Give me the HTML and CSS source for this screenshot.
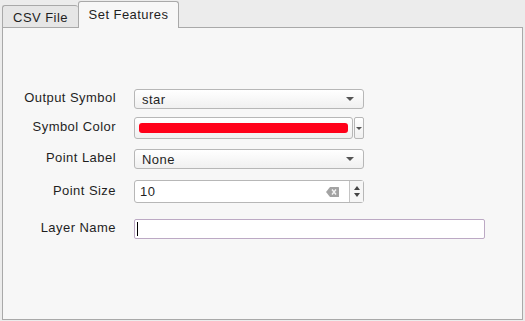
FILE: index.html
```html
<!DOCTYPE html>
<html>
<head>
<meta charset="utf-8">
<link rel="stylesheet" href="styles.css">
</head>
<body>
<div class="tabs">
  <div class="tab inactive">CSV File</div>
  <div class="tab active">Set Features</div>
</div>
<div class="panel">
  <div class="form">
    <div class="row r1">
      <label class="lbl">Output Symbol</label>
      <div class="combo w230"><span>star</span><span class="arrow"></span></div>
    </div>
    <div class="row r2">
      <label class="lbl">Symbol Color</label>
      <div class="colorwrap">
        <div class="colorbtn"><div class="swatch"></div></div>
        <div class="colordrop"><span class="arrow"></span></div>
      </div>
    </div>
    <div class="row r3">
      <label class="lbl">Point Label</label>
      <div class="combo w230"><span>None</span><span class="arrow"></span></div>
    </div>
    <div class="row r4">
      <label class="lbl">Point Size</label>
      <div class="spin">
        <div class="spintext"><span>10</span>
          <svg class="clear" width="13" height="10" viewBox="0 0 13 10"><path d="M4 0H12.5a0.5 0.5 0 0 1 .5.5V9.5a.5.5 0 0 1-.5.5H4L0 5Z" fill="#a3a3a3"/><path d="M6 2.5L10 7.5M10 2.5L6 7.5" stroke="#f4f4f4" stroke-width="1.4"/></svg>
        </div>
        <div class="spinbtns"><span class="up"></span><span class="down"></span></div>
      </div>
    </div>
    <div class="row r5">
      <label class="lbl">Layer Name</label>
      <div class="textinput"><span class="caret"></span></div>
    </div>
  </div>
</div>
</body>
</html>
```
FILE: styles.css
```css
html, body { margin: 0; padding: 0; }
body {
  width: 525px; height: 321px;
  background: #ececec;
  font-family: "Liberation Sans", Arial, sans-serif;
  font-size: 13px;
  letter-spacing: 0.45px;
  color: #1f1f1f;
  overflow: hidden;
}
.tabs {
  display: flex;
  align-items: flex-end;
  height: 27px;
  padding-left: 2px;
}
.tab {
  box-sizing: border-box;
  display: flex;
  align-items: center;
  justify-content: center;
  border: 1px solid #a9a9a9;
  border-bottom: none;
  border-radius: 3px 3px 0 0;
}
.tab.inactive {
  width: 76px; height: 22px;
  background: #e6e6e6;
  padding-top: 1px;
  border-right: none;
}
.tab.active {
  width: 101px; height: 27px;
  background: #f7f7f7;
  padding-bottom: 1px;
  margin-bottom: -1px;
  position: relative;
  z-index: 1;
}
.panel {
  box-sizing: border-box;
  margin-left: 2px;
  width: 521px;
  height: 293px;
  background: #f7f7f7;
  border: 1px solid #a9a9a9;
}
.form {
  display: flex;
  flex-direction: column;
  padding-top: 61px;
}
.row {
  display: flex;
  align-items: center;
}
.r2 { margin-top: 8px; }
.r3 { margin-top: 10px; }
.r4 { margin-top: 11px; }
.r5 { margin-top: 16px; }
.lbl {
  width: 113px;
  text-align: right;
  margin-right: 18px;
  margin-top: -3px;
}
.combo {
  box-sizing: border-box;
  height: 20px;
  display: flex;
  align-items: center;
  justify-content: space-between;
  padding: 0 9px 0 7px;
  border: 1px solid #b7b7b7;
  border-radius: 3px;
  background: linear-gradient(#ffffff, #f0f0f0);
}
.w230 { width: 230px; }
.arrow {
  width: 0; height: 0;
  border-left: 4px solid transparent;
  border-right: 4px solid transparent;
  border-top: 4px solid #555;
}
.colorwrap { display: flex; height: 22px; }
.colorbtn {
  box-sizing: border-box;
  width: 219px; height: 22px;
  border: 1px solid #b7b7b7;
  border-radius: 3px;
  background: linear-gradient(#ffffff, #f0f0f0);
  display: flex;
  align-items: center;
  padding: 0 4px;
}
.swatch {
  flex: 1;
  height: 10px;
  background: #ff0019;
  border-radius: 3px;
}
.colordrop {
  box-sizing: border-box;
  width: 10px; height: 22px;
  margin-left: 1px;
  border: 1px solid #b7b7b7;
  border-radius: 2px;
  background: linear-gradient(#ffffff, #f0f0f0);
  display: flex;
  align-items: center;
  justify-content: center;
}
.colordrop .arrow {
  border-left-width: 3px;
  border-right-width: 3px;
  border-top-width: 3px;
}
.spin {
  display: flex;
  height: 23px;
  width: 230px;
  box-sizing: border-box;
  border: 1px solid #b7b7b7;
  border-radius: 3px;
  background: #fff;
}
.spintext {
  flex: 1;
  display: flex;
  align-items: center;
  justify-content: space-between;
  padding: 0 10px 0 5px;
}
.clear { display: block; }
.spinbtns {
  box-sizing: border-box;
  width: 14px;
  border-left: 1px solid #c4c4c4;
  background: #f6f6f6;
  display: flex;
  flex-direction: column;
  align-items: center;
  justify-content: center;
  gap: 3px;
}
.up {
  width: 0; height: 0;
  border-left: 3.5px solid transparent;
  border-right: 3.5px solid transparent;
  border-bottom: 4px solid #444;
}
.down {
  width: 0; height: 0;
  border-left: 3.5px solid transparent;
  border-right: 3.5px solid transparent;
  border-top: 4px solid #444;
}
.textinput {
  box-sizing: border-box;
  width: 351px; height: 20px;
  border: 1px solid #bca9c4;
  border-radius: 2px;
  background: #fff;
  display: flex;
  align-items: center;
  padding-left: 2px;
}
.caret {
  width: 1px; height: 14px;
  background: #000;
}
```
